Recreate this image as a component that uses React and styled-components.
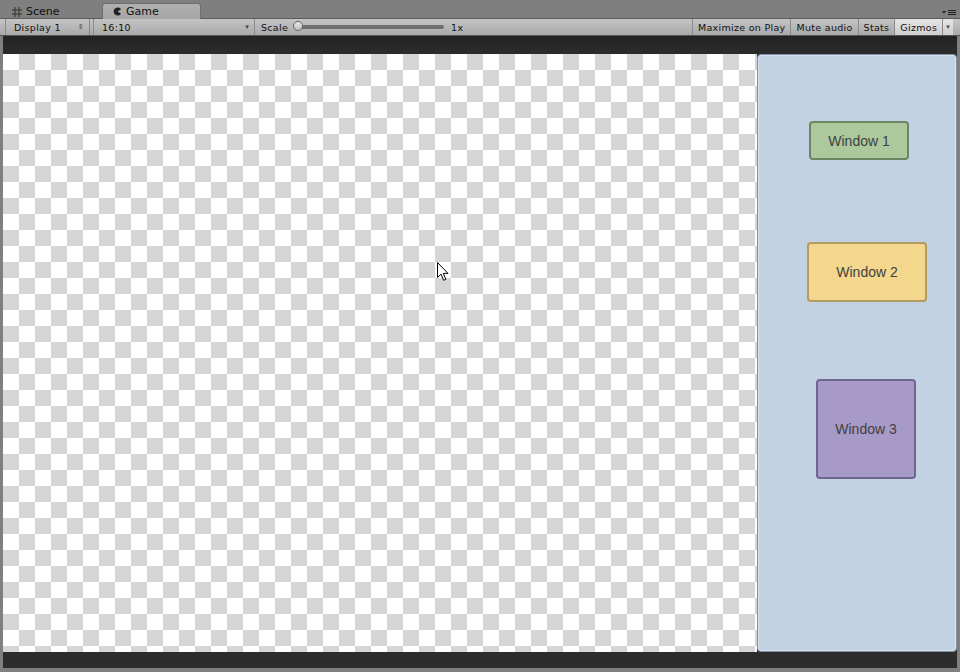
import React from "react";
import styled, { createGlobalStyle } from "styled-components";

const Global = createGlobalStyle`
  html, body { margin: 0; padding: 0; background: #7f7f7f; }
  body { font-family: "DejaVu Sans", "Liberation Sans", sans-serif; }
`;

const Root = styled.div`
  width: 960px;
  height: 672px;
  background: #7f7f7f;
  display: flex;
  flex-direction: column;
  overflow: hidden;
`;

const TabBar = styled.div`
  height: 18px;
  flex: 0 0 18px;
  display: flex;
  align-items: flex-end;
  padding-left: 8px;
  position: relative;
  border-bottom: 1px solid #5c5c5c;
`;

const Tab = styled.div`
  height: ${(p) => (p.$active ? "16px" : "15px")};
  width: ${(p) => p.$w}px;
  margin-right: 4px;
  box-sizing: border-box;
  display: flex;
  align-items: center;
  gap: 4px;
  padding-left: ${(p) => p.$pl}px;
  font-size: 11px;
  color: #111;
  background: ${(p) => (p.$active ? "linear-gradient(#b0b0b0, #a6a6a6)" : "transparent")};
  border: ${(p) => (p.$active ? "1px solid #6e6e6e" : "none")};
  border-bottom: none;
  border-radius: 3px 3px 0 0;
  margin-bottom: -1px;
`;

const TabMenu = styled.svg`
  position: absolute;
  right: 4px;
  top: 10px;
`;

const Toolbar = styled.div`
  height: 17px;
  flex: 0 0 17px;
  display: flex;
  align-items: stretch;
  background: linear-gradient(#c4c4c4, #a9a9a9);
  border-bottom: 1px solid #555;
  box-sizing: border-box;
  padding: 0 7px 0 5px;
  font-size: 9.5px;
  color: #111;
  letter-spacing: 0.3px;
`;

const Drop = styled.div`
  width: ${(p) => p.$w}px;
  display: flex;
  align-items: center;
  justify-content: space-between;
  padding: 0 5px 0 8px;
  box-sizing: border-box;
  border-left: 1px solid #8a8a8a;
  border-right: 1px solid #8a8a8a;
  margin-right: 3px;
`;

const Arrow = styled.span`
  font-size: 7px;
  color: #444;
`;

const ScaleBox = styled.div`
  display: flex;
  align-items: center;
  padding-left: 3px;
  flex: 1;
`;

const SliderTrack = styled.div`
  width: 148px;
  height: 4px;
  margin: 0 7px 0 8px;
  background: #6f6f6f;
  border-radius: 2px;
  position: relative;
`;

const Knob = styled.div`
  position: absolute;
  left: -3px;
  top: -4px;
  width: 10px;
  height: 10px;
  border-radius: 50%;
  background: linear-gradient(#e8e8e8, #bdbdbd);
  border: 1px solid #666;
  box-sizing: border-box;
`;

const Btn = styled.div`
  display: flex;
  align-items: center;
  padding: 0 ${(p) => p.$px || 5}px;
  border-left: 1px solid #8a8a8a;
  background: ${(p) => (p.$on ? "linear-gradient(#e4e4e4, #cfcfcf)" : "transparent")};
`;

const GameView = styled.div`
  flex: 1;
  margin: 0 3px;
  background: #2c2c2c;
  display: flex;
  flex-direction: column;
  padding: 18px 0 16px;
  background-image: linear-gradient(#222 0, #2c2c2c 18px);
`;

const Content = styled.div`
  flex: 1;
  display: flex;
  position: relative;
`;

const Checker = styled.div`
  width: 754px;
  background-color: #ffffff;
  background-image: conic-gradient(#d6d6d6 0 25%, #ffffff 0 50%, #d6d6d6 0 75%, #ffffff 0);
  background-size: 32px 32px;
`;

const Panel = styled.div`
  width: 200px;
  box-sizing: border-box;
  background: #c2d2e2;
  border: 1px solid #8090a8;
  box-shadow: inset 0 0 0 1px #d8e4ef;
  border-radius: 4px;
  position: relative;
`;

const Win = styled.div`
  position: absolute;
  left: ${(p) => p.$x}px;
  top: ${(p) => p.$y}px;
  width: ${(p) => p.$w}px;
  height: ${(p) => p.$h}px;
  box-sizing: border-box;
  background: ${(p) => p.$bg};
  border: 2px solid ${(p) => p.$bd};
  border-radius: 4px;
  display: flex;
  align-items: center;
  justify-content: center;
  font-family: "Liberation Sans", Arial, sans-serif;
  font-size: 14px;
  color: #3f3f3f;
`;

const Cursor = styled.svg`
  position: absolute;
  left: 434px;
  top: 208px;
`;

const Bottom = styled.div`
  height: 4px;
  flex: 0 0 4px;
`;

function GridIcon() {
  return (
    <svg width="10" height="10" viewBox="0 0 10 10">
      <path d="M3 0v10M7 0v10M0 3h10M0 7h10" stroke="#333" strokeWidth="1" fill="none" />
    </svg>
  );
}

function GameIcon() {
  return (
    <svg width="9" height="9" viewBox="0 0 10 10">
      <path d="M9 2.6A4.5 4.5 0 1 0 9 7.4L5.2 5Z" fill="#222" />
    </svg>
  );
}

export default function App() {
  return (
    <Root>
      <Global />
      <TabBar>
        <Tab $w={90} $pl={4}>
          <GridIcon />
          Scene
        </Tab>
        <Tab $active $w={99} $pl={10}>
          <GameIcon />
          Game
        </Tab>
        <TabMenu width="14" height="6" viewBox="0 0 14 6">
          <path d="M0 1h4L2 3.5Z" fill="#222" />
          <path d="M6 0.5h8M6 2.5h8M6 4.5h8" stroke="#222" strokeWidth="1" />
        </TabMenu>
      </TabBar>
      <Toolbar>
        <Drop $w={85}>
          Display 1<Arrow>⇕</Arrow>
        </Drop>
        <Drop $w={162}>
          16:10<Arrow>▾</Arrow>
        </Drop>
        <ScaleBox>
          Scale
          <SliderTrack>
            <Knob />
          </SliderTrack>
          1x
        </ScaleBox>
        <Btn>Maximize on Play</Btn>
        <Btn>Mute audio</Btn>
        <Btn>Stats</Btn>
        <Btn $on>Gizmos</Btn>
        <Btn $on $px={3}>
          <Arrow>▾</Arrow>
        </Btn>
      </Toolbar>
      <GameView>
        <Content>
          <Checker />
          <Panel>
            <Win $x={51} $y={66} $w={100} $h={39} $bg="#abc99d" $bd="#6c8563">
              Window 1
            </Win>
            <Win $x={49} $y={187} $w={120} $h={60} $bg="#f2d78d" $bd="#b39c5e">
              Window 2
            </Win>
            <Win $x={58} $y={324} $w={100} $h={100} $bg="#a89ac7" $bd="#6d668e">
              Window 3
            </Win>
          </Panel>
          <Cursor width="14" height="20" viewBox="0 0 14 20">
            <path
              d="M0.5 0.5V15.5L4 12.2L6.6 18.3L8.8 17.3L6.3 11.4H11L0.5 0.5Z"
              fill="#fff"
              stroke="#000"
              strokeWidth="1"
            />
          </Cursor>
        </Content>
      </GameView>
      <Bottom />
    </Root>
  );
}
